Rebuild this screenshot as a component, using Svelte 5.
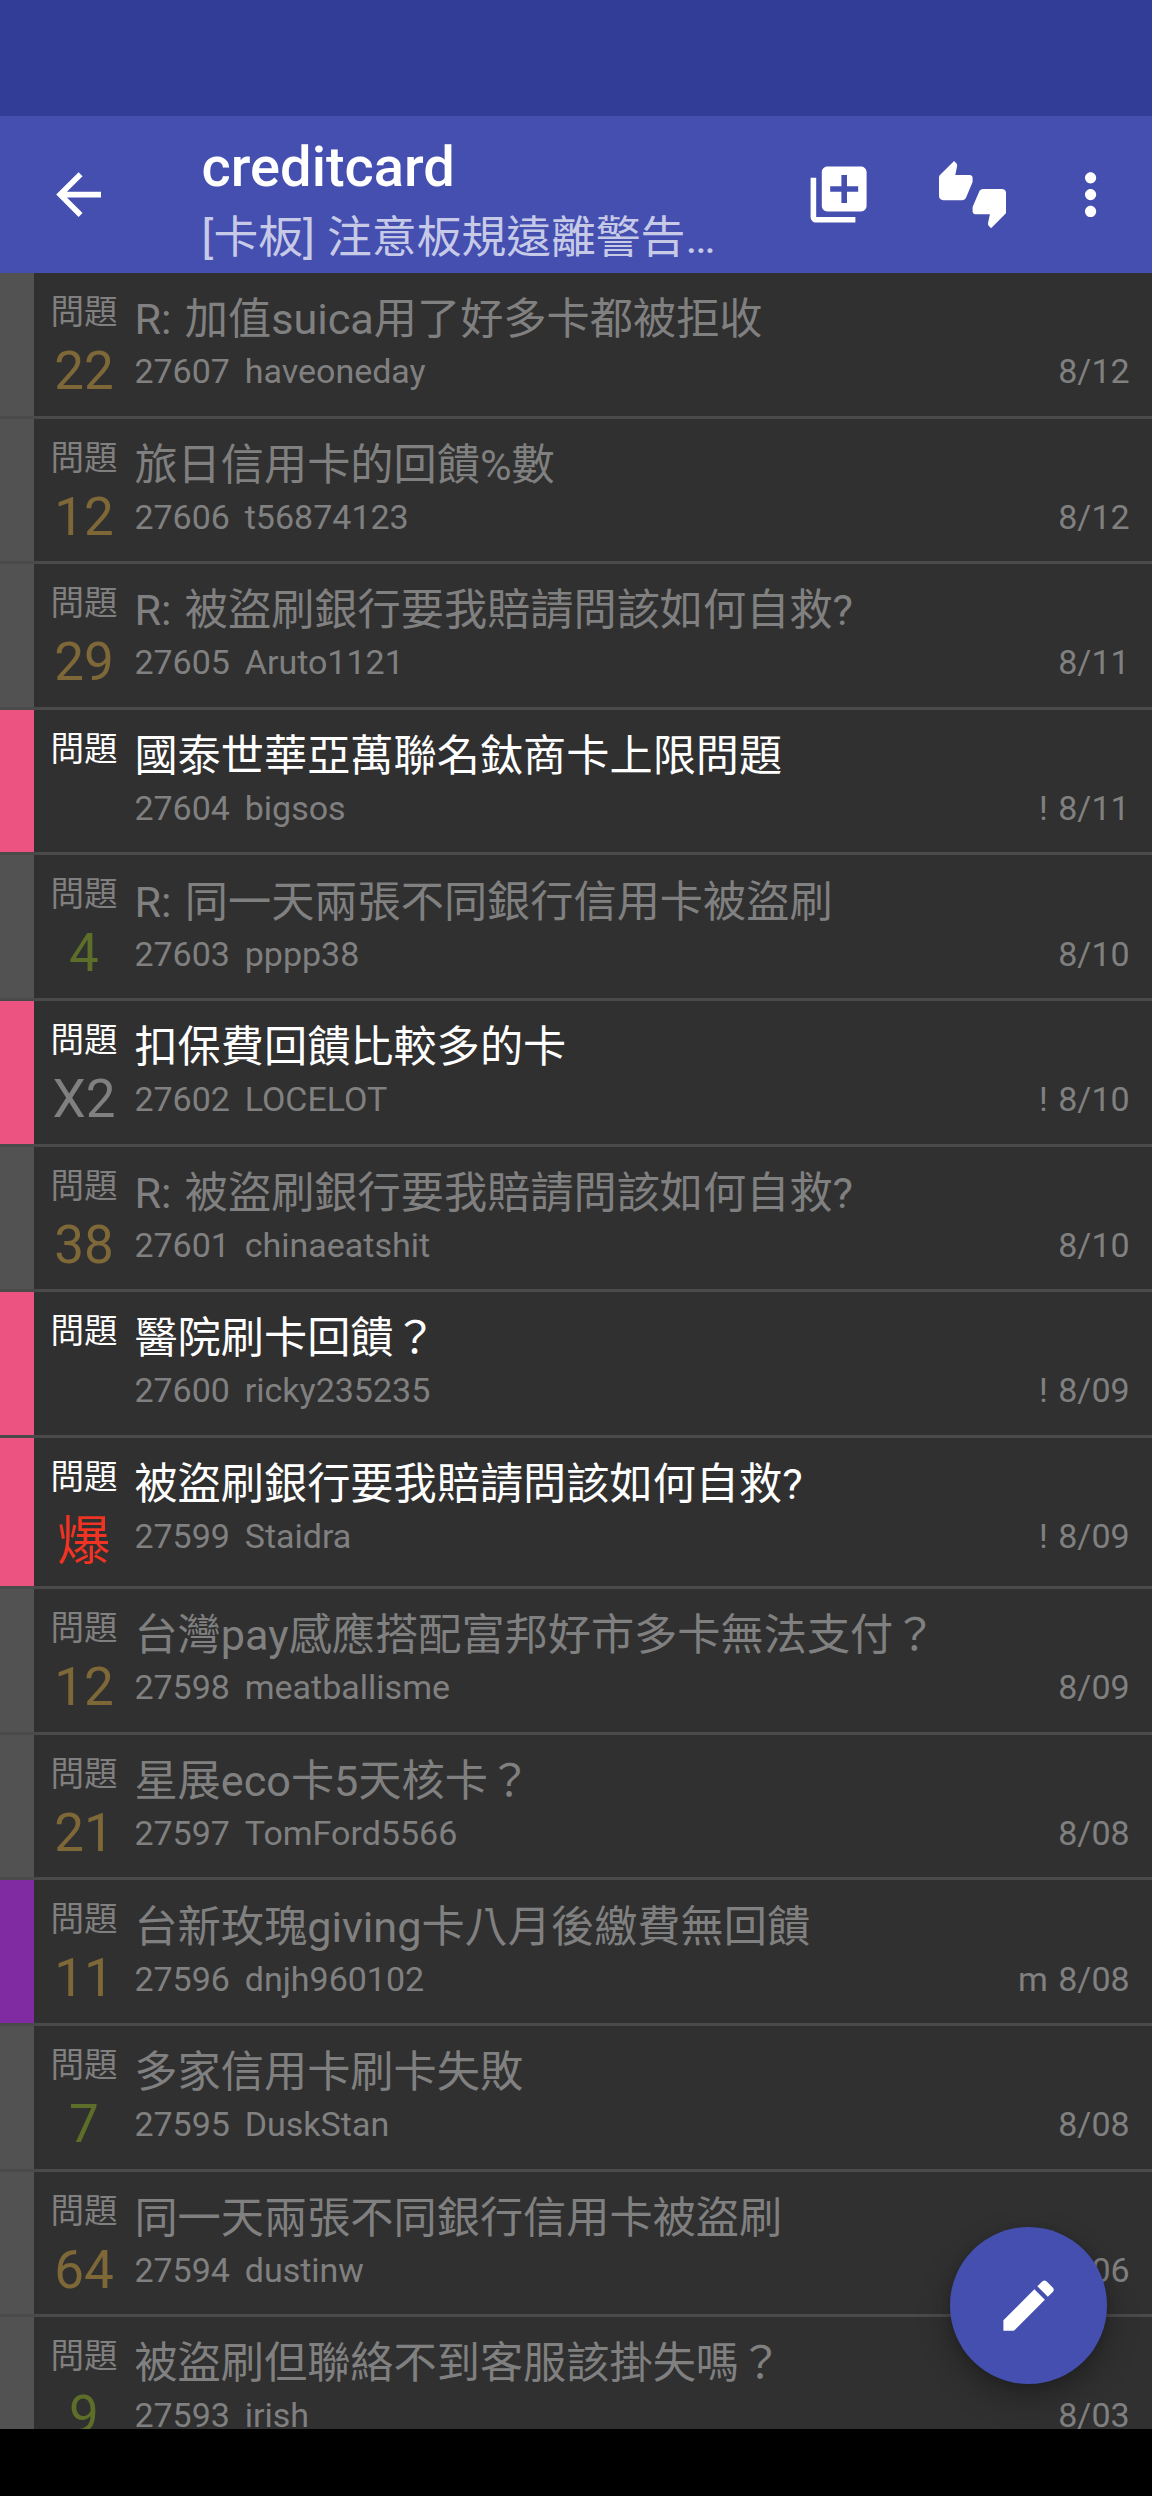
<script lang="ts">
  type Article = {
    id: number;
    title: string;
    author: string;
    date: string;
    score?: string;
    level?: 'low' | 'mid' | 'boom' | 'down';
    mark?: string;
    unread?: boolean;
  };

  const board = 'creditcard';
  const subtitle = '[卡板] 注意板規遠離警告…';

  const articles: Article[] = [
    { id: 27607, title: 'R: 加值suica用了好多卡都被拒收', author: 'haveoneday', date: '8/12', score: '22', level: 'mid' },
    { id: 27606, title: '旅日信用卡的回饋%數', author: 't56874123', date: '8/12', score: '12', level: 'mid' },
    { id: 27605, title: 'R: 被盜刷銀行要我賠請問該如何自救?', author: 'Aruto1121', date: '8/11', score: '29', level: 'mid' },
    { id: 27604, title: '國泰世華亞萬聯名鈦商卡上限問題', author: 'bigsos', date: '8/11', mark: '!', unread: true },
    { id: 27603, title: 'R: 同一天兩張不同銀行信用卡被盜刷', author: 'pppp38', date: '8/10', score: '4', level: 'low' },
    { id: 27602, title: '扣保費回饋比較多的卡', author: 'LOCELOT', date: '8/10', score: 'X2', level: 'down', mark: '!', unread: true },
    { id: 27601, title: 'R: 被盜刷銀行要我賠請問該如何自救?', author: 'chinaeatshit', date: '8/10', score: '38', level: 'mid' },
    { id: 27600, title: '醫院刷卡回饋？', author: 'ricky235235', date: '8/09', mark: '!', unread: true },
    { id: 27599, title: '被盜刷銀行要我賠請問該如何自救?', author: 'Staidra', date: '8/09', score: '爆', level: 'boom', mark: '!', unread: true },
    { id: 27598, title: '台灣pay感應搭配富邦好市多卡無法支付？', author: 'meatballisme', date: '8/09', score: '12', level: 'mid' },
    { id: 27597, title: '星展eco卡5天核卡？', author: 'TomFord5566', date: '8/08', score: '21', level: 'mid' },
    { id: 27596, title: '台新玫瑰giving卡八月後繳費無回饋', author: 'dnjh960102', date: '8/08', score: '11', level: 'mid', mark: 'm' },
    { id: 27595, title: '多家信用卡刷卡失敗', author: 'DuskStan', date: '8/08', score: '7', level: 'low' },
    { id: 27594, title: '同一天兩張不同銀行信用卡被盜刷', author: 'dustinw', date: '8/06', score: '64', level: 'mid' },
    { id: 27593, title: '被盜刷但聯絡不到客服該掛失嗎？', author: 'irish', date: '8/03', score: '9', level: 'low' },
  ];
</script>

<div class="screen">
  <div class="status-bar"></div>
  <header class="toolbar">
    <svg class="icon back" viewBox="0 0 24 24">
      <path d="M20 11H7.83l5.59-5.59L12 4l-8 8 8 8 1.41-1.41L7.83 13H20v-2z" />
    </svg>
    <div class="heading">
      <h1>{board}</h1>
      <p>{subtitle}</p>
    </div>
    <svg class="icon add" viewBox="0 0 24 24">
      <path d="M4 6H2v14c0 1.1.9 2 2 2h14v-2H4V6zm16-4H8c-1.1 0-2 .9-2 2v12c0 1.1.9 2 2 2h12c1.1 0 2-.9 2-2V4c0-1.1-.9-2-2-2zm-1 9h-4v4h-2v-4H9V9h4V5h2v4h4v2z" />
    </svg>
    <svg class="icon thumbs" viewBox="0 0 24 24">
      <path d="M12 6c0-.55-.45-1-1-1H5.82l.66-3.18.02-.23c0-.31-.13-.59-.33-.8L5.38 0 .44 4.94C.17 5.21 0 5.59 0 6v6.5c0 .83.67 1.5 1.5 1.5h6.75c.62 0 1.15-.38 1.38-.91l2.26-5.29c.07-.17.11-.36.11-.55V6zm10.5 4h-6.75c-.62 0-1.15.38-1.38.91l-2.26 5.29c-.07.17-.11.36-.11.55V18c0 .55.45 1 1 1h5.18l-.66 3.18-.02.24c0 .31.13.59.33.8l.79.78 4.94-4.94c.27-.27.44-.65.44-1.06v-6.5c0-.83-.67-1.5-1.5-1.5z" />
    </svg>
    <svg class="icon more" viewBox="0 0 24 24">
      <path d="M12 8c1.1 0 2-.9 2-2s-.9-2-2-2-2 .9-2 2 .9 2 2 2zm0 2c-1.1 0-2 .9-2 2s.9 2 2 2 2-.9 2-2-.9-2-2-2zm0 6c-1.1 0-2 .9-2 2s.9 2 2 2 2-.9 2-2-.9-2-2-2z" />
    </svg>
  </header>

  <main class="list">
    {#each articles as article (article.id)}
      <article class="row" class:unread={article.unread} class:marked={article.mark === 'm'} class:tall={article.level === 'boom'}>
        <div class="strip"></div>
        <div class="side">
          <span class="category">問題</span>
          <span class="score {article.level ?? ''}">{article.score ?? ''}</span>
        </div>
        <div class="content">
          <h2>{article.title}</h2>
          <div class="meta">
            <span class="number">{article.id}</span>
            <span class="author">{article.author}</span>
            <span class="date">{article.mark ? `${article.mark} ` : ''}{article.date}</span>
          </div>
        </div>
      </article>
    {/each}
    <button class="fab" aria-label="compose">
      <svg class="icon" viewBox="0 0 24 24">
        <path d="M3 17.25V21h3.75L17.81 9.94l-3.75-3.75L3 17.25zM20.71 7.04c.39-.39.39-1.02 0-1.41l-2.34-2.34c-.39-.39-1.02-.39-1.41 0l-1.83 1.83 3.75 3.75 1.83-1.83z" />
      </svg>
    </button>
  </main>
  <div class="nav-bar"></div>
</div>

<style>
  :global(body) {
    margin: 0;
    background: #000;
  }

  .screen {
    display: flex;
    flex-direction: column;
    width: 1152px;
    height: 2496px;
    overflow: hidden;
    font-family: Roboto, 'Noto Sans CJK TC', sans-serif;
  }

  .status-bar {
    flex: none;
    height: 116px;
    background: #323d98;
  }

  .toolbar {
    flex: none;
    display: flex;
    align-items: center;
    box-sizing: border-box;
    height: 157px;
    padding: 0 28px 0 45px;
    background: #444fb0;
  }

  .icon {
    flex: none;
    display: block;
    width: 67.2px;
    height: 67.2px;
    fill: #fff;
  }

  .heading {
    flex: none;
    align-self: flex-start;
    width: 560px;
    margin-left: 89.4px;
    padding-top: 16px;
  }

  h1,
  h2,
  p {
    margin: 0;
    white-space: nowrap;
  }

  h1 {
    font-size: 56px;
    font-weight: 500;
    line-height: 70px;
    color: #fff;
  }

  p {
    margin-top: 3px;
    font-size: 44.8px;
    line-height: 66px;
    word-spacing: 1px;
    color: #c7cae7;
  }

  .add {
    margin-left: 43px;
  }

  .thumbs {
    margin-left: 67.2px;
  }

  .more {
    margin-left: 50.4px;
  }

  .list {
    position: relative;
    flex: none;
    height: 2156px;
    overflow: hidden;
    background: #303030;
  }

  .row {
    display: flex;
    box-sizing: border-box;
    height: 145.6px;
    border-bottom: 3px solid #4a4a4a;
    color: #808080;
  }

  .row.tall {
    height: 151.4px;
  }

  .strip {
    width: 33.6px;
    background: #525252;
  }

  .unread .strip {
    background: #ec5381;
  }

  .marked .strip {
    background: #812ba3;
  }

  .side {
    display: flex;
    flex-direction: column;
    align-items: center;
    width: 100.8px;
    padding-top: 18px;
  }

  .category {
    font-size: 33.6px;
    line-height: 44px;
  }

  .score {
    margin-top: 6px;
    font-size: 53px;
    line-height: 60px;
  }

  .low {
    color: #5c6e28;
  }

  .mid {
    color: #7f6838;
  }

  /* the CJK glyph sits on a taller line than the digits */
  .boom {
    color: #f03322;
    line-height: 72px;
  }

  .down {
    color: #808080;
  }

  .content {
    flex: 1;
    padding: 18.2px 22.4px 0 0;
  }

  h2 {
    font-size: 43.2px;
    font-weight: 400;
    line-height: 58px;
    word-spacing: 2.6px;
  }

  .unread h2,
  .unread .category {
    color: #fff;
  }

  .meta {
    display: flex;
    margin-top: 2px;
    font-size: 34px;
    line-height: 40px;
    word-spacing: 2px;
  }

  .author {
    margin-left: 14.8px;
  }

  .date {
    margin-left: auto;
  }

  .fab {
    position: absolute;
    right: 45px;
    bottom: 45px;
    display: flex;
    align-items: center;
    justify-content: center;
    width: 156.8px;
    height: 156.8px;
    padding: 0;
    border: 0;
    border-radius: 50%;
    background: #444fb0;
    box-shadow: 0 14px 32px rgba(0, 0, 0, 0.28), 0 2px 10px rgba(0, 0, 0, 0.14);
  }

  .nav-bar {
    flex: 1;
    background: #000;
  }
</style>
